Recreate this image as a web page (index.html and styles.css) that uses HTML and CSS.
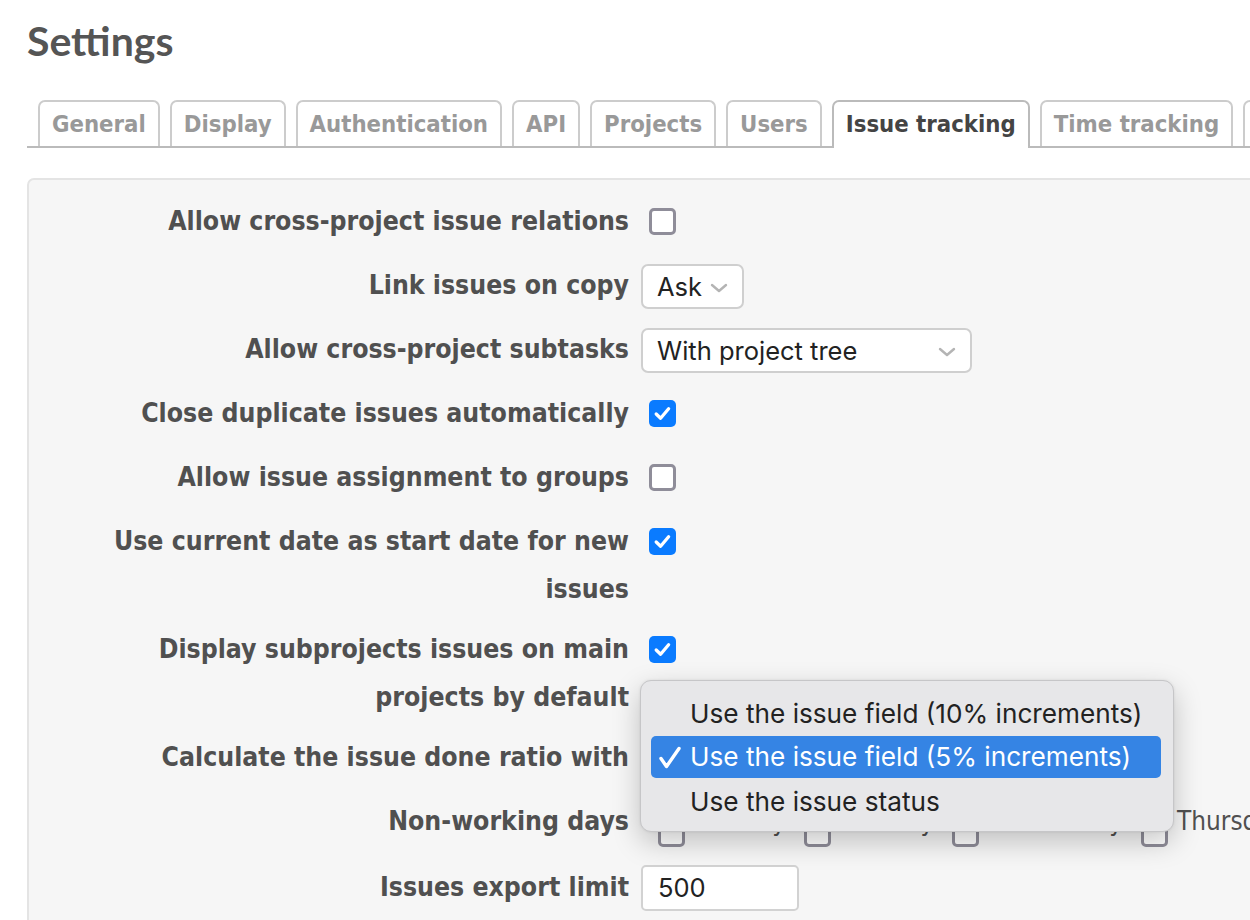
FILE: index.html
```html
<!DOCTYPE html>
<html lang="en">
<head>
<meta charset="utf-8">
<title>Settings</title>
<link rel="stylesheet" href="styles.css">
</head>
<body>
<div class="page">
  <h2 class="title">Settings</h2>
  <ul class="tabs">
    <li class="tab">General</li>
    <li class="tab">Display</li>
    <li class="tab">Authentication</li>
    <li class="tab">API</li>
    <li class="tab">Projects</li>
    <li class="tab">Users</li>
    <li class="tab selected">Issue tracking</li>
    <li class="tab">Time tracking</li>
    <li class="tab">Files</li>
  </ul>

  <div class="box">
    <div class="row">
      <label class="lbl">Allow cross-project issue relations</label>
      <div class="ctl"><span class="cb"></span></div>
    </div>
    <div class="row">
      <label class="lbl">Link issues on copy</label>
      <div class="ctl">
        <div class="select select-ask"><span class="sel-text">Ask</span><svg class="chev" width="18" height="10" viewBox="0 0 18 10"><path d="M2 2 L9 8 L16 2" fill="none" stroke="#b4b4b4" stroke-width="2.4" stroke-linecap="round" stroke-linejoin="round"/></svg></div>
      </div>
    </div>
    <div class="row">
      <label class="lbl">Allow cross-project subtasks</label>
      <div class="ctl">
        <div class="select select-tree"><span class="sel-text">With project tree</span><svg class="chev" width="18" height="10" viewBox="0 0 18 10"><path d="M2 2 L9 8 L16 2" fill="none" stroke="#b4b4b4" stroke-width="2.4" stroke-linecap="round" stroke-linejoin="round"/></svg></div>
      </div>
    </div>
    <div class="row">
      <label class="lbl">Close duplicate issues automatically</label>
      <div class="ctl"><span class="cb checked"><svg width="27" height="27" viewBox="0 0 27 27"><path d="M7.2 14 L11.6 18.2 L19.6 8.8" fill="none" stroke="#fff" stroke-width="3.3" stroke-linecap="round" stroke-linejoin="round"/></svg></span></div>
    </div>
    <div class="row">
      <label class="lbl">Allow issue assignment to groups</label>
      <div class="ctl"><span class="cb"></span></div>
    </div>
    <div class="row">
      <label class="lbl">Use current date as start date for new issues</label>
      <div class="ctl"><span class="cb checked"><svg width="27" height="27" viewBox="0 0 27 27"><path d="M7.2 14 L11.6 18.2 L19.6 8.8" fill="none" stroke="#fff" stroke-width="3.3" stroke-linecap="round" stroke-linejoin="round"/></svg></span></div>
    </div>
    <div class="row">
      <label class="lbl">Display subprojects issues on main projects by default</label>
      <div class="ctl"><span class="cb checked"><svg width="27" height="27" viewBox="0 0 27 27"><path d="M7.2 14 L11.6 18.2 L19.6 8.8" fill="none" stroke="#fff" stroke-width="3.3" stroke-linecap="round" stroke-linejoin="round"/></svg></span></div>
    </div>
    <div class="row">
      <label class="lbl">Calculate the issue done ratio with</label>
      <div class="ctl ctl-popup">
        <div class="popup">
          <div class="opt">Use the issue field (10% increments)</div>
          <div class="opt active"><svg class="tick" width="24" height="24" viewBox="0 0 24 24"><path d="M3 12.5 L8.5 20.5 L21 2.5" fill="none" stroke="#fff" stroke-width="3.4" stroke-linecap="round" stroke-linejoin="round"/></svg>Use the issue field (5% increments)</div>
          <div class="opt">Use the issue status</div>
        </div>
      </div>
    </div>
    <div class="row">
      <label class="lbl">Non-working days</label>
      <div class="ctl days">
        <span class="day"><span class="cb"></span>Monday</span>
        <span class="day"><span class="cb"></span>Tuesday</span>
        <span class="day"><span class="cb"></span>Wednesday</span>
        <span class="day"><span class="cb"></span>Thursday</span>
        <span class="day"><span class="cb"></span>Friday</span>
      </div>
    </div>
    <div class="row row-last">
      <label class="lbl">Issues export limit</label>
      <div class="ctl"><div class="input">500</div></div>
    </div>
  </div>
</div>
</body>
</html>
```

FILE: styles.css
```css
html, body {
  margin: 0;
  padding: 0;
  background: #fff;
}
body {
  width: 1250px;
  height: 920px;
  overflow: hidden;
  font-family: "DejaVu Sans Condensed", "DejaVu Sans", Verdana, sans-serif;
  color: #505050;
}
.page {
  width: 1600px;
  padding-left: 27px;
}
.title {
  margin: 17px 0 0;
  font-family: Lato, "Open Sans", sans-serif;
  font-weight: 700;
  font-size: 41px;
  line-height: 48px;
  color: #555;
}

/* tabs */
.tabs {
  list-style: none;
  margin: 35px 0 0;
  padding: 0 0 0 11px;
  display: flex;
  gap: 10px;
  border-bottom: 2px solid #bbb;
  height: 46px;
}
.tab {
  flex: none;
  height: 44px;
  line-height: 45px;
  padding: 0 12px;
  border: 2px solid #ccc;
  border-bottom: none;
  border-radius: 7px 7px 0 0;
  font-weight: 700;
  font-size: 23.7px;
  color: #999;
  background: #fff;
}
.tab.selected {
  color: #444;
  border-color: #bbb;
  height: 46px;
  margin-bottom: -2px;
  position: relative;
}

/* box */
.box {
  margin-top: 30px;
  background: #f6f6f6;
  border: 2px solid #e4e4e4;
  border-radius: 7px;
  padding: 11px 0 20px 60px;
  height: 900px;
}
.row {
  display: flex;
  align-items: flex-start;
  padding: 6px 0;
  min-height: 52px;
}
.row-last {
  padding-top: 8px;
}
.lbl {
  flex: none;
  width: 540px;
  text-align: right;
  font-weight: 700;
  font-size: 26.4px;
  line-height: 48px;
  color: #505050;
}
.ctl {
  margin-left: 12px;
  height: 48px;
  display: flex;
  align-items: center;
}

/* checkbox */
.cb {
  box-sizing: border-box;
  display: inline-block;
  width: 27px;
  height: 27px;
  margin-left: 8px;
  border: 3px solid #8f8d99;
  border-radius: 5px;
  background: #fff;
  flex: none;
}
.cb.checked {
  border: none;
  background: #0a7bff;
}
.cb.checked svg {
  display: block;
  width: 27px;
  height: 27px;
}

/* selects */
.select {
  box-sizing: border-box;
  height: 45px;
  margin-top: 3px;
  display: flex;
  align-items: center;
  justify-content: space-between;
  padding: 0 14px 0 14px;
  background: #fff;
  border: 2px solid #cfcfcf;
  border-radius: 7px;
  font-family: Inter, "Noto Sans", sans-serif;
  font-size: 25.5px;
  color: #222;
}
.select-ask { width: 103px; }
.select-tree { width: 331px; }
.chev { flex: none; margin-top: 2px; }

/* popup menu */
.ctl-popup {
  position: relative;
  width: 320px;
}
.popup {
  position: absolute;
  left: -1px;
  top: -53px;
  box-sizing: border-box;
  width: 534px;
  height: 152px;
  padding: 11px 12px 0 10px;
  background: #e7e7e9;
  border: 1px solid #c6c6c8;
  border-radius: 11px;
  box-shadow: 0 10px 28px rgba(0, 0, 0, 0.22), 0 0 3px rgba(0, 0, 0, 0.08);
  font-family: Inter, "Noto Sans", sans-serif;
  font-size: 26.2px;
  color: #222;
  z-index: 5;
}
.opt {
  height: 44px;
  line-height: 44px;
  padding-left: 39px;
  border-radius: 5px;
  white-space: nowrap;
  position: relative;
}
.opt.active {
  height: 42px;
  line-height: 42px;
  margin-bottom: 2px;
  background: #3584e4;
  color: #fff;
}
.tick {
  position: absolute;
  left: 7px;
  top: 10px;
}

/* non-working days */
.days {
  gap: 0;
  font-size: 25.9px;
  color: #505050;
  white-space: nowrap;
}
.day {
  display: inline-flex;
  align-items: center;
  margin-right: 18px;
}
.day .cb {
  margin: 24px 9px 0 17px;
}
.day + .day .cb {
  margin-left: 0;
}

/* input */
.input {
  box-sizing: border-box;
  width: 158px;
  height: 46px;
  margin-top: 2px;
  padding: 0 15px;
  background: #fff;
  border: 2px solid #d2d2d2;
  border-radius: 5px;
  font-family: Inter, "Noto Sans", sans-serif;
  font-size: 25.5px;
  line-height: 42px;
  color: #222;
}
```
